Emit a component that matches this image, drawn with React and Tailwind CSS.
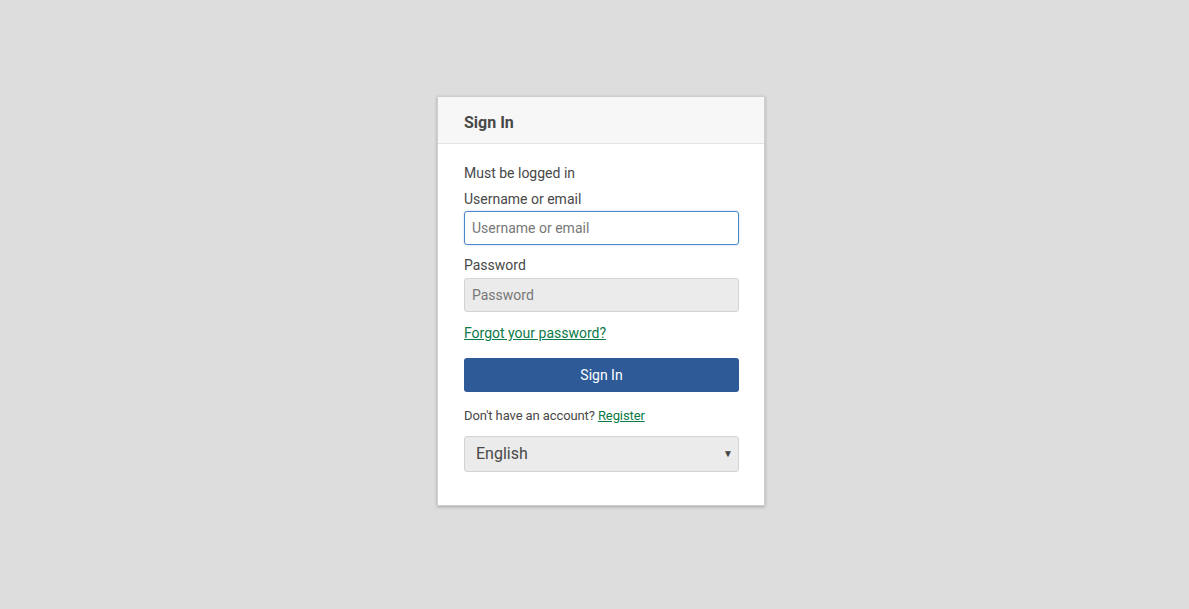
export default function App() {
  return (
    <div className="min-h-[609px] w-full bg-[#dddddd] pt-[96px]" style={{ fontFamily: "Roboto, 'Liberation Sans', sans-serif" }}>
      <div className="ml-[437px] w-[328px] border border-[#cfcfcf] bg-white shadow-[0_1px_3px_rgba(0,0,0,0.25)]">
        <div className="h-[47px] px-[26px] pt-[16px] bg-[#f7f7f7] border-b border-[#e3e3e3]">
          <h1 className="text-[16px] leading-[20px] font-bold text-[#484848]">Sign In</h1>
        </div>
        <div className="pl-[26px] pr-[25px] pt-[19px] pb-[33px] text-[#484848]">
          <p className="text-[14px] leading-[20px]">Must be logged in</p>
          <label className="block mt-[6px] text-[14px] leading-[20px]">Username or email</label>
          <input
            className="mt-[2px] block w-full h-[34px] rounded-[3px] border border-[#4a86c8] px-[7px] text-[14px] text-[#444] placeholder-[#777] outline-none shadow-[0_0_2px_rgba(74,134,200,0.4)]"
            placeholder="Username or email"
          />
          <label className="block mt-[10px] text-[14px] leading-[20px]">Password</label>
          <input
            type="password"
            className="mt-[3px] block w-full h-[34px] rounded-[3px] border border-[#d3d3d3] bg-[#ebebeb] px-[7px] text-[14px] placeholder-[#777] outline-none"
            placeholder="Password"
          />
          <a href="#" className="block mt-[11px] text-[14px] leading-[20px] text-[#0b7a48] underline w-fit">Forgot your password?</a>
          <button className="mt-[15px] block w-full h-[34px] rounded-[3px] bg-[#2e5a98] text-white text-[14px]">Sign In</button>
          <p className="mt-[16px] text-[13px] leading-[16px] text-[#484848] tracking-[-0.1px]">
            Don't have an account? <a href="#" className="text-[#0b7a48] underline">Register</a>
          </p>
          <div className="relative mt-[12px] h-[36px] rounded-[3px] border border-[#d3d3d3] bg-[#ebebeb] flex items-center px-[11px]">
            <span className="text-[16px] text-[#484848]">English</span>
            <span className="absolute right-[5px] top-[9px] text-[10px] text-[#444]">▼</span>
          </div>
        </div>
      </div>
    </div>
  );
}
